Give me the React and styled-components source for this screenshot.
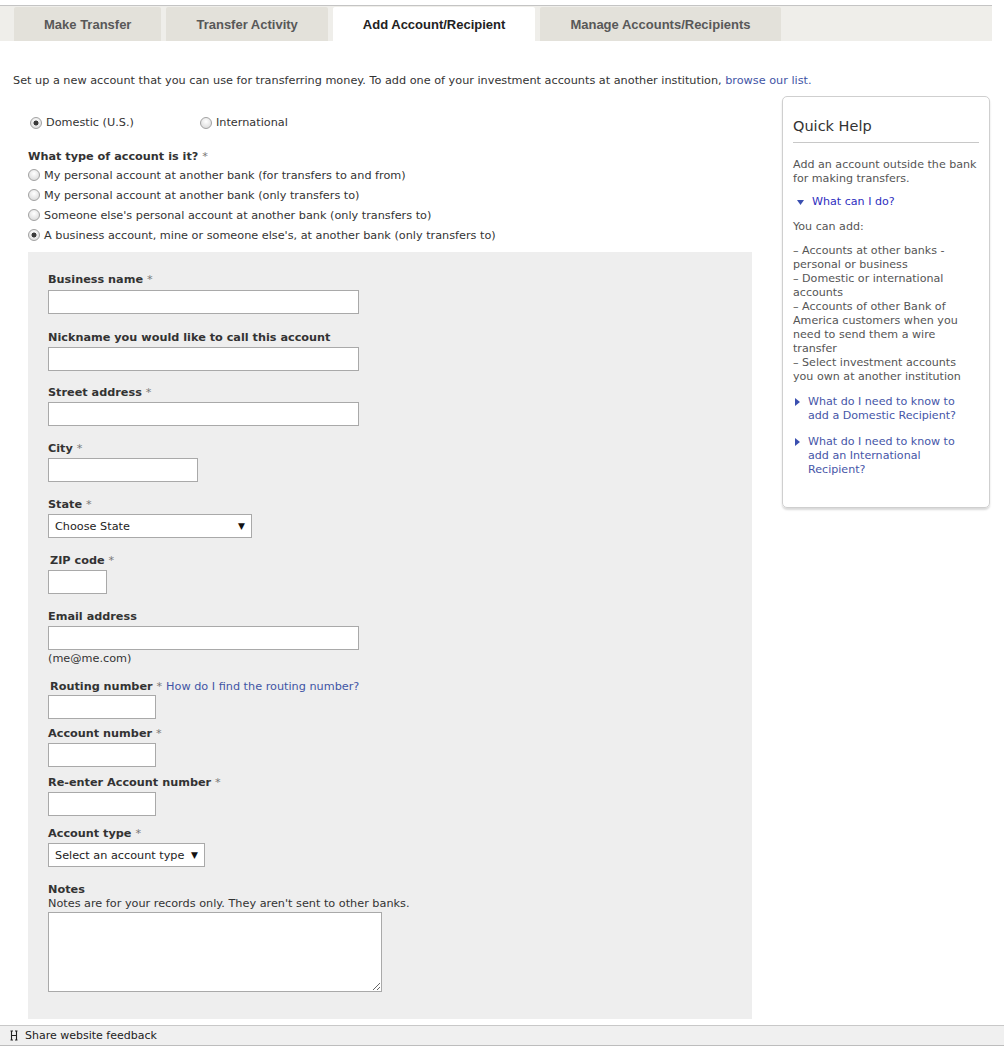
import React from "react";
import styled, { createGlobalStyle } from "styled-components";

const GlobalStyle = createGlobalStyle`
  html, body { margin: 0; padding: 0; background: #fff; }
  body { font-family: "DejaVu Sans", Verdana, sans-serif; font-size: 11.25px; color: #333; }
  * { box-sizing: border-box; }
`;

const Page = styled.div`
  width: 1004px;
  padding-top: 5px;
`;

const TabBar = styled.div`
  width: 992px;
  border-top: 1px solid #c4c4c4;
  background: #efeeea;
  padding: 1px 0 0 14px;
  display: flex;
  gap: 5px;
`;

const Tab = styled.div`
  height: 34px;
  padding: 1px 30px 0;
  display: flex;
  align-items: center;
  font-family: "Liberation Sans", Arial, sans-serif;
  font-weight: bold;
  font-size: 13px;
  color: ${(p) => (p.$active ? "#222" : "#585858")};
  background: ${(p) => (p.$active ? "#fff" : "#e3e1da")};
  border-radius: 2px 2px 0 0;
`;

const Intro = styled.p`
  margin: 33px 0 8px 13px;
  line-height: 14px;
  color: #333;
`;

const Link = styled.a`
  color: ${(p) => p.$color || "#3f55a5"};
  font-weight: ${(p) => (p.$normal ? "normal" : "inherit")};
  text-decoration: none;
  cursor: pointer;
`;

const Columns = styled.div`
  display: flex;
  align-items: flex-start;
  padding-left: 28px;
`;

const MainCol = styled.div`
  width: 724px;
  padding-top: 20px;
`;

const RadioRow = styled.div`
  display: flex;
  align-items: center;
  height: ${(p) => p.$h || 14}px;
  gap: 4px;
`;

const InlineRadios = styled.div`
  display: flex;
`;

const RadioOption = styled.label`
  display: flex;
  align-items: center;
  gap: 4px;
  width: ${(p) => p.$w || "auto"};
  padding-left: ${(p) => p.$indent || 0}px;
  line-height: 14px;
`;

const Radio = styled.span`
  display: inline-block;
  width: 12px;
  height: 12px;
  border-radius: 50%;
  border: 1px solid #a2a2a2;
  flex-shrink: 0;
  background: ${(p) =>
    p.$checked
      ? "radial-gradient(circle at 50% 50%, #3a3a3a 0 2.2px, transparent 2.8px), radial-gradient(circle at 50% 35%, #ffffff, #d6d6d6)"
      : "radial-gradient(circle at 50% 35%, #ffffff, #d4d4d4)"};
`;

const Question = styled.div`
  margin-top: 20px;
  margin-bottom: 1px;
  font-weight: bold;
  line-height: 14px;
  color: #333;
`;

const Req = styled.span`
  font-weight: normal;
  color: #777;
`;

const OptionList = styled.div`
  display: flex;
  flex-direction: column;
`;

const Panel = styled.div`
  margin-top: 7px;
  background: #eeeeee;
  padding: 21px 20px 27px 20px;
`;

const Field = styled.div`
  margin-top: ${(p) => p.$mt || 0}px;
  display: flex;
  flex-direction: column;
  align-items: flex-start;
`;

const Label = styled.div`
  font-weight: bold;
  line-height: 14px;
  margin-bottom: ${(p) => (p.$mb != null ? p.$mb : 3)}px;
  padding-left: ${(p) => p.$indent || 0}px;
  color: #333;
`;

const Sub = styled.div`
  line-height: 13px;
  margin-bottom: 2px;
  color: #333;
`;

const Helper = styled.div`
  margin-top: 2px;
  line-height: 14px;
  color: #333;
`;

const Input = styled.input`
  width: ${(p) => p.$w}px;
  height: 24px;
  border: 1px solid #a9a9a9;
  background: #fff;
  margin: 0;
  padding: 2px 6px;
  font: inherit;
  outline: none;
`;

const SelectBox = styled.div`
  width: ${(p) => p.$w}px;
  height: 24px;
  border: 1px solid #a9a9a9;
  background: #fff;
  display: flex;
  align-items: center;
  justify-content: space-between;
  padding: 0 6px 0 6px;
  color: #222;
`;

const Arrow = styled.span`
  font-size: 9px;
  color: #111;
`;

const TextArea = styled.textarea`
  width: 334px;
  height: 80px;
  border: 1px solid #a9a9a9;
  background: #fff;
  margin: 0;
  font: inherit;
  outline: none;
`;

const Sidebar = styled.div`
  width: 208px;
  margin-left: 30px;
  border: 1px solid #cfcfcf;
  border-radius: 5px;
  box-shadow: 0 2px 2px rgba(0, 0, 0, 0.15);
  padding: 19px 11px 30px 10px;
  color: #555;
  font-size: 11.1px;
`;

const HelpTitle = styled.div`
  font-size: 14.5px;
  line-height: 20px;
  color: #333;
  padding-bottom: 6px;
  margin-right: -1px;
  border-bottom: 1px solid #c8c8c8;
`;

const HelpText = styled.div`
  margin-top: ${(p) => p.$mt || 0}px;
  line-height: 14px;
  white-space: pre-line;
`;

const HelpLink = styled.div`
  margin-top: ${(p) => p.$mt || 0}px;
  display: flex;
  align-items: flex-start;
  gap: 8px;
  line-height: 14px;
  padding-left: ${(p) => p.$indent || 0}px;
  padding-right: 2px;
`;

const Tri = styled.svg`
  flex-shrink: 0;
  margin-top: ${(p) => p.$mt || 4}px;
`;

const Footer = styled.div`
  margin-top: 6px;
  height: 21px;
  border-top: 1px solid #c8c8c8;
  border-bottom: 1px solid #bdbdbd;
  background: #f0f0f0;
  display: flex;
  align-items: center;
  gap: 7px;
  padding-left: 10px;
  font-size: 11px;
  color: #222;
`;

const TriDown = () => (
  <Tri width="7" height="5" viewBox="0 0 7 5" $mt={5}>
    <path d="M0 0 H7 L3.5 5 Z" fill="#3a4fb0" />
  </Tri>
);

const TriRight = () => (
  <Tri width="5" height="8" viewBox="0 0 5 8" $mt={3}>
    <path d="M0 0 L5 4 L0 8 Z" fill="#3a4fb0" />
  </Tri>
);

const FeedbackIcon = () => (
  <svg width="8" height="11" viewBox="0 0 8 11">
    <path
      d="M1.5 1 V10 M6.5 1 V10 M1.5 5.5 H6.5 M0.5 1 H3 M5 1 H7.5 M0.5 10 H3 M5 10 H7.5"
      stroke="#222"
      strokeWidth="1.1"
      fill="none"
    />
  </svg>
);

export default function App() {
  return (
    <Page>
      <GlobalStyle />
      <TabBar>
        <Tab>Make Transfer</Tab>
        <Tab>Transfer Activity</Tab>
        <Tab $active>Add Account/Recipient</Tab>
        <Tab>Manage Accounts/Recipients</Tab>
      </TabBar>

      <Intro>
        Set up a new account that you can use for transferring money. To add one of your
        investment accounts at another institution, <Link>browse our list.</Link>
      </Intro>

      <Columns>
        <MainCol>
          <InlineRadios>
            <RadioOption $w="172px" $indent={2}>
              <Radio $checked /> Domestic (U.S.)
            </RadioOption>
            <RadioOption>
              <Radio /> International
            </RadioOption>
          </InlineRadios>

          <Question>
            What type of account is it? <Req>*</Req>
          </Question>
          <OptionList>
            <RadioRow $h={20}>
              <Radio /> My personal account at another bank (for transfers to and from)
            </RadioRow>
            <RadioRow $h={20}>
              <Radio /> My personal account at another bank (only transfers to)
            </RadioRow>
            <RadioRow $h={20}>
              <Radio /> Someone else's personal account at another bank (only transfers to)
            </RadioRow>
            <RadioRow $h={20}>
              <Radio $checked /> A business account, mine or someone else's, at another bank (only
              transfers to)
            </RadioRow>
          </OptionList>

          <Panel>
            <Field>
              <Label>
                Business name <Req>*</Req>
              </Label>
              <Input $w={311} />
            </Field>
            <Field $mt={17}>
              <Label $mb={2}>Nickname you would like to call this account</Label>
              <Input $w={311} />
            </Field>
            <Field $mt={15}>
              <Label $mb={2}>
                Street address <Req>*</Req>
              </Label>
              <Input $w={311} />
            </Field>
            <Field $mt={16}>
              <Label $mb={2}>
                City <Req>*</Req>
              </Label>
              <Input $w={150} />
            </Field>
            <Field $mt={16}>
              <Label $mb={2}>
                State <Req>*</Req>
              </Label>
              <SelectBox $w={204}>
                <span>Choose State</span>
                <Arrow>▼</Arrow>
              </SelectBox>
            </Field>
            <Field $mt={16}>
              <Label $mb={2} $indent={2}>
                ZIP code <Req>*</Req>
              </Label>
              <Input $w={59} />
            </Field>
            <Field $mt={16}>
              <Label $mb={2}>Email address</Label>
              <Input $w={311} />
              <Helper>(me@me.com)</Helper>
            </Field>
            <Field $mt={14}>
              <Label $mb={1} $indent={2}>
                Routing number <Req>*</Req>{" "}
                <Link $normal>How do I find the routing number?</Link>
              </Label>
              <Input $w={108} />
            </Field>
            <Field $mt={8}>
              <Label $mb={2}>
                Account number <Req>*</Req>
              </Label>
              <Input $w={108} />
            </Field>
            <Field $mt={9}>
              <Label $mb={2}>
                Re-enter Account number <Req>*</Req>
              </Label>
              <Input $w={108} />
            </Field>
            <Field $mt={11}>
              <Label $mb={2}>
                Account type <Req>*</Req>
              </Label>
              <SelectBox $w={157}>
                <span>Select an account type</span>
                <Arrow>▼</Arrow>
              </SelectBox>
            </Field>
            <Field $mt={16}>
              <Label $mb={0}>Notes</Label>
              <Sub>Notes are for your records only. They aren't sent to other banks.</Sub>
              <TextArea />
            </Field>
          </Panel>
        </MainCol>

        <Sidebar>
          <HelpTitle>Quick Help</HelpTitle>
          <HelpText $mt={15}>Add an account outside the bank for making transfers.</HelpText>
          <HelpLink $mt={9} $indent={4}>
            <TriDown />
            <Link $color="#2e2ec0">What can I do?</Link>
          </HelpLink>
          <HelpText $mt={11}>You can add:</HelpText>
          <HelpText $mt={10}>
            – Accounts at other banks - personal or business{"\n"}– Domestic or international
            accounts{"\n"}– Accounts of other Bank of America customers when you need to send them
            a wire transfer{"\n"}– Select investment accounts you own at another institution
          </HelpText>
          <HelpLink $mt={11} $indent={2}>
            <TriRight />
            <Link $color="#4656a8">What do I need to know to add a Domestic Recipient?</Link>
          </HelpLink>
          <HelpLink $mt={12} $indent={2}>
            <TriRight />
            <Link $color="#4656a8">What do I need to know to add an International Recipient?</Link>
          </HelpLink>
        </Sidebar>
      </Columns>

      <Footer>
        <FeedbackIcon />
        <span>Share website feedback</span>
      </Footer>
    </Page>
  );
}
